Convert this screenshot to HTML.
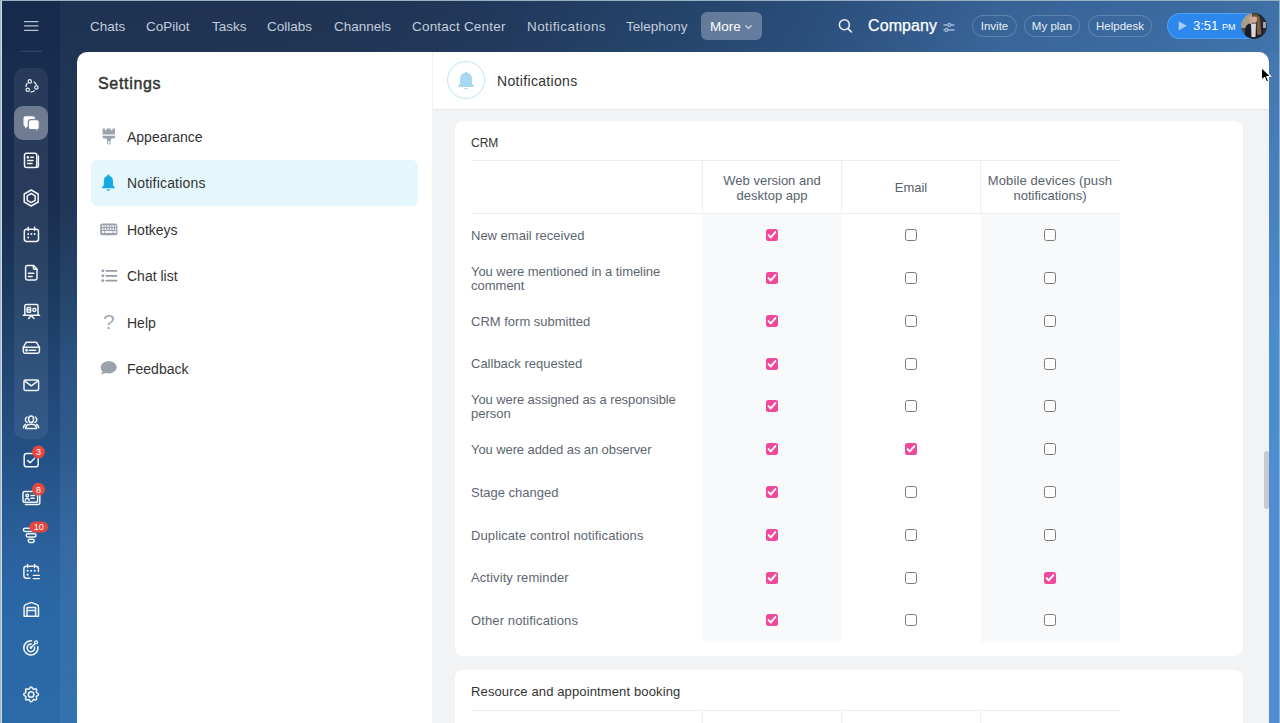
<!DOCTYPE html>
<html><head><meta charset="utf-8">
<style>
*{box-sizing:border-box;margin:0;padding:0}
html,body{width:1280px;height:723px;overflow:hidden;font-family:"Liberation Sans",sans-serif}
body{position:relative;background:#2d5486}
.abs{position:absolute}
#frame{position:absolute;left:0;top:0;width:1280px;height:723px;border-left:1px solid #a3b8cc;border-top:1px solid #98b1c2;border-right:1px solid #8fb0c8;box-shadow:inset 1px 0 0 #cdd9e0;z-index:50}
#side{position:absolute;left:2px;top:0;width:58px;height:723px;background:linear-gradient(180deg,rgba(0,20,57,.25) 0%,rgba(0,20,57,.25) 9%,rgba(0,26,63,.24) 52%,rgba(0,77,154,.21) 84%,rgba(0,63,136,.16) 98%)}
.nav{position:absolute;top:19px;font-size:13.5px;color:#c3cddb;white-space:nowrap;line-height:16px}
#panel{position:absolute;left:77px;top:52px;width:1192px;height:671px;background:#fff;border-radius:10px 10px 0 0}
#content{position:absolute;left:433px;top:110px;width:836px;height:613px;background:#f2f3f5}
.card{position:absolute;left:455px;width:788px;background:#fff;border-radius:8px}
.lbl{position:absolute;left:471px;font-size:13px;color:#5d6671;line-height:14px;width:225px;white-space:nowrap}
.th{position:absolute;top:173.3px;width:138px;text-align:center;font-size:13px;color:#58616c;line-height:15px;white-space:nowrap}
.colbg{position:absolute;background:#f8f9fb}
.cb{position:absolute;width:12px;height:12px;border-radius:2.5px}
.cb.off{border:1px solid #7b7b7b;background:#fff}
.cb.on{background:#f0489a}
.cb.on svg{position:absolute;left:0;top:0}
.sitem{position:absolute;left:127px;font-size:14px;color:#333;line-height:16px;white-space:nowrap}
.sico{position:absolute;left:99px;width:20px;height:20px}
.sb{position:absolute;left:21px;width:20px;height:20px}
.pill{position:absolute;top:15px;height:22px;border-radius:11px;border:1px solid rgba(255,255,255,.2);font-size:11.5px;color:#eaf0f6;text-align:center;line-height:20px;white-space:nowrap}
#hdrbg{position:absolute;left:0;top:0;width:1280px;height:64px;background:linear-gradient(180deg,rgba(0,10,40,.05),rgba(0,0,0,0)),linear-gradient(90deg,#1f3354 0%,#213554 23%,#223a5c 38%,#27476f 54%,#2b4f7c 62.5%,#3a679b 78%,#3c6da3 90%,#4176ad 100%)}
#leftbg{position:absolute;left:0;top:52px;width:77px;height:671px;background:linear-gradient(180deg,#203455 0%,#213555 7%,#213555 22%,#244569 35.5%,#2d5486 48.4%,#2e5d91 60.8%,#376aa5 74.2%,#356ea8 82.6%,#3372ae 100%)}
#rightbg{position:absolute;left:1268px;top:52px;width:12px;height:671px;background:linear-gradient(180deg,#4477b0 0%,#4a8ecf 46%,#508ed4 100%)}

</style></head><body>
<div id="hdrbg"></div><div id="leftbg"></div><div id="rightbg"></div>
<div id="side"></div>
<div id="frame"></div>
<svg class="abs" style="left:0;top:0;z-index:5" width="60" height="723" viewBox="0 0 60 723">
<g fill="none" stroke="#b9c4d3" stroke-width="1.2" stroke-linecap="round">
  <path d="M24.5 21.6H38M24.5 25.9H38M24.5 30.3H38"/>
</g>
<path d="M20.7 51.3H42.3" stroke="#3a4d6c" stroke-width="1"/>
<rect x="14" y="68" width="34" height="371" rx="10" fill="rgba(255,255,255,0.07)"/>
<rect x="14" y="106" width="34" height="34" rx="9" fill="rgba(255,255,255,0.33)"/>
<g fill="none" stroke="#e9edf3" stroke-width="1.3" stroke-linecap="round" stroke-linejoin="round">
  <!-- 1 flow -->
  <path d="M34.01 81.95A5.3 5.3 0 0 1 36.21 84.49M34.35 90.83A5.3 5.3 0 0 1 30.87 91.78M26.00 86.41A5.3 5.3 0 0 1 27.05 83.33" stroke-width="1.3"/>
  <circle cx="29.8" cy="81.4" r="1.7" stroke-width="1.2"/>
  <circle cx="36.4" cy="87.5" r="1.7" stroke-width="1.2"/>
  <circle cx="27.7" cy="89.8" r="1.7" stroke-width="1.2"/>
</g>
<!-- 2 chat -->
<g>
  <path d="M26 116.3H33Q35 116.3 35 118.3V124.5Q35 126.5 33 126.5H27.5L25 128.6V126.3Q23.5 126 23.5 124.5V118.3Q23.5 116.3 25.5 116.3Z" fill="#fff"/>
  <path d="M30.6 119.6H37Q39.2 119.6 39.2 121.8V127.4Q39.2 129.4 37.6 129.6V131.8L35.2 129.6H30.6Q28.4 129.6 28.4 127.4V121.8Q28.4 119.6 30.6 119.6Z" fill="#fff" stroke="#76859e" stroke-width="1.2"/>
</g>
<g fill="none" stroke="#f2f4f7" stroke-width="1.5" stroke-linecap="round" stroke-linejoin="round">
  <!-- 3 newspaper -->
  <rect x="24.5" y="153.3" width="12.3" height="14.3" rx="2"/>
  <path d="M38.4 156V166Q38.4 167.6 36.6 167.6"/>
  <path d="M30.8 157.3H33.5M27.6 160.6H33M27.6 163.6H32"/>
  <circle cx="27.9" cy="157.3" r=".6" fill="#fff"/>
  <!-- 4 hexagon -->
  <path d="M31.2 190L38.2 194V202L31.2 206L24.2 202V194Z"/>
  <path d="M31.2 193.5L35.2 195.8V200.3L31.2 202.6L27.2 200.3V195.8Z"/>
  <!-- 5 calendar -->
  <rect x="24.3" y="229.2" width="14.2" height="12.3" rx="2.4"/>
  <path d="M28.2 227.2V230.6M34.6 227.2V230.6"/>
  <!-- 6 doc -->
  <path d="M27.3 265.6H33.6L37 269V278.3Q37 280 35.3 280H27.3Q25.6 280 25.6 278.3V267.3Q25.6 265.6 27.3 265.6Z"/>
  <path d="M33.4 265.8V268Q33.4 269.2 34.6 269.2H36.8"/>
  <path d="M28.4 273.3H33.8M28.4 276.6H32.2"/>
  <!-- 7 presentation -->
  <path d="M23.3 315.2H39.6M24.8 315V306Q24.8 304.6 26.2 304.6H36.6Q38 304.6 38 306V315M31.3 315.6L28.6 318.4M31.3 315.6L34 318.4"/>
  <rect x="27.2" y="307.4" width="3.4" height="4.8" rx=".5"/><path d="M27.2 309.8H30.6"/>
  <circle cx="34.4" cy="309.8" r="1.6"/>
  <!-- 8 drive -->
  <path d="M23.3 347.3L25.7 343Q26.2 342.3 27 342.3H35.7Q36.5 342.3 37 343L39.4 347.3V351.6Q39.4 353.3 37.7 353.3H25Q23.3 353.3 23.3 351.6Z"/>
  <path d="M23.3 347.3H39.4M29.2 350.3H35.6"/>
  <circle cx="26.5" cy="350.3" r=".7" fill="#fff"/>
  <!-- 9 mail -->
  <rect x="24" y="380" width="14.6" height="10.6" rx="1.6"/>
  <path d="M24.6 380.8L31.3 385.8L38 380.8"/>
  <!-- 10 people -->
  <ellipse cx="31.1" cy="419.3" rx="2.5" ry="3.2"/>
  <path d="M25.6 428.4Q25.6 424.2 31.1 424.2Q36.6 424.2 36.6 428.4Z"/>
  <path d="M26.9 417.1Q25.2 418 25.4 420Q25.6 421.7 27.1 422.4M35.3 417.1Q37 418 36.8 420Q36.6 421.7 35.1 422.4M23.5 427.8Q23.7 425.3 25.5 424.3M38.7 427.8Q38.5 425.3 36.7 424.3"/>
  <!-- 11 tasks -->
  <rect x="24.2" y="453.4" width="14" height="13.4" rx="2.6"/>
  <path d="M27.8 460.6L30.1 462.8L34.4 458.4"/>
  <!-- 12 contact -->
  <rect x="23" y="491.4" width="14.6" height="10.8" rx="1.8"/>
  <path d="M25.4 504.4H37.8Q39.8 504.4 39.8 502.4V494"/>
  <circle cx="27.2" cy="495.6" r="1.3"/>
  <path d="M25.2 500.2Q25.5 498.4 27.2 498.4Q28.9 498.4 29.2 500.2M31 495.6H34.5M31 498.2H34"/>
  <!-- 13 funnel -->
  <rect x="23.4" y="528.2" width="14.6" height="3.2" rx="1.6"/>
  <rect x="26.2" y="533.8" width="9.8" height="3.2" rx="1.6"/>
  <rect x="28.2" y="539.2" width="6" height="3.2" rx="1.6"/>
  <!-- 14 calendar list -->
  <path d="M38.4 571.4V568.6Q38.4 566.2 36 566.2H26.3Q23.9 566.2 23.9 568.6V575.8Q23.9 578.2 26.3 578.2H29.8"/>
  <path d="M27.6 564.6V567.4M34.6 564.6V567.4"/><path d="M33.2 575.3H39.4M33.2 578.6H39.4" stroke-width="1.3"/>
  <!-- 15 warehouse -->
  <path d="M24.1 616.2V607.2Q24.1 605.4 25.6 604.6L31.3 602.4L37 604.6Q38.5 605.4 38.5 607.2V616.2Z"/>
  <path d="M27 616V607.4H35.6V616M27 610.6H35.6"/>
  <!-- 16 target -->
  <path d="M31.52 640.83A7.1 7.1 0 1 0 37.89 646.67"/>
  <path d="M31.23 644.11A3.8 3.8 0 1 0 34.57 646.92"/>
  <path d="M30.9 647.7L35 643.5"/>
  <circle cx="36.1" cy="642.3" r="1.5" stroke-width="1.3"/>
  <!-- 17 gear -->
  <path d="M38.50 694.40 L38.37 694.88 L38.02 695.31 L37.52 695.68 L37.02 695.99 L36.61 696.27 L36.37 696.58 L36.31 696.97 L36.40 697.46 L36.55 698.04 L36.63 698.65 L36.58 699.20 L36.33 699.63 L35.90 699.88 L35.35 699.93 L34.74 699.85 L34.16 699.70 L33.67 699.61 L33.28 699.67 L32.97 699.91 L32.69 700.32 L32.38 700.82 L32.01 701.32 L31.58 701.67 L31.10 701.80 L30.62 701.67 L30.19 701.32 L29.82 700.82 L29.51 700.32 L29.23 699.91 L28.92 699.67 L28.53 699.61 L28.04 699.70 L27.46 699.85 L26.85 699.93 L26.30 699.88 L25.87 699.63 L25.62 699.20 L25.57 698.65 L25.65 698.04 L25.80 697.46 L25.89 696.97 L25.83 696.58 L25.59 696.27 L25.18 695.99 L24.68 695.68 L24.18 695.31 L23.83 694.88 L23.70 694.40 L23.83 693.92 L24.18 693.49 L24.68 693.12 L25.18 692.81 L25.59 692.53 L25.83 692.22 L25.89 691.83 L25.80 691.34 L25.65 690.76 L25.57 690.15 L25.62 689.60 L25.87 689.17 L26.30 688.92 L26.85 688.87 L27.46 688.95 L28.04 689.10 L28.53 689.19 L28.92 689.13 L29.23 688.89 L29.51 688.48 L29.82 687.98 L30.19 687.48 L30.62 687.13 L31.10 687.00 L31.58 687.13 L32.01 687.48 L32.38 687.98 L32.69 688.48 L32.97 688.89 L33.28 689.13 L33.67 689.19 L34.16 689.10 L34.74 688.95 L35.35 688.87 L35.90 688.92 L36.33 689.17 L36.58 689.60 L36.63 690.15 L36.55 690.76 L36.40 691.34 L36.31 691.83 L36.37 692.22 L36.61 692.53 L37.02 692.81 L37.52 693.12 L38.02 693.49 L38.37 693.92Z"/>
  <circle cx="31.1" cy="694.4" r="2.75"/>
</g>
<g fill="#fff">
  <circle cx="28.2" cy="234" r=".95"/><circle cx="31.4" cy="234" r=".95"/><circle cx="34.6" cy="234" r=".95"/><circle cx="28.2" cy="237.5" r=".95"/>
  <circle cx="27.6" cy="570.8" r="1.05"/><circle cx="31.1" cy="570.8" r="1.05"/><circle cx="34.7" cy="570.8" r="1.05"/><circle cx="27.6" cy="574.6" r="1.05"/>
  <circle cx="30.9" cy="647.6" r="1.3"/>
</g>
<!-- badges -->
<g font-family="Liberation Sans" font-size="9" fill="#fff" text-anchor="middle">
  <circle cx="38.5" cy="452" r="6.4" fill="#e8473d"/>
  <text x="38.5" y="455.3">3</text>
  <circle cx="38.5" cy="489.2" r="6.4" fill="#e8473d"/>
  <text x="38.5" y="492.5">8</text>
  <rect x="29.4" y="521.4" width="18.6" height="11" rx="5.5" fill="#e8473d"/>
  <text x="38.7" y="530">10</text>
</g>
</svg>


<!-- header nav -->
<div class="nav" style="left:90px">Chats</div>
<div class="nav" style="left:146px">CoPilot</div>
<div class="nav" style="left:212px">Tasks</div>
<div class="nav" style="left:267px">Collabs</div>
<div class="nav" style="left:334px">Channels</div>
<div class="nav" style="left:412px;letter-spacing:.2px">Contact Center</div>
<div class="nav" style="left:527px;letter-spacing:.42px">Notifications</div>
<div class="nav" style="left:626px">Telephony</div>
<div class="abs" style="left:701px;top:12px;width:61px;height:28px;border-radius:6px;background:rgba(225,232,242,.33)"></div>
<div class="nav" style="left:710px;color:#fff">More</div>
<svg class="abs" style="left:744px;top:24px" width="10" height="6" viewBox="0 0 10 6"><path d="M1.4 1.4L4.5 4.5L7.6 1.4" fill="none" stroke="#dfe5ee" stroke-width="1.15"/></svg>
<!-- header right -->
<svg class="abs" style="left:836px;top:17px" width="18" height="18" viewBox="0 0 18 18"><circle cx="8.4" cy="7.8" r="5" fill="none" stroke="#eef2f7" stroke-width="1.5"/><path d="M12 11.6L15.4 15" stroke="#eef2f7" stroke-width="1.6" stroke-linecap="round"/></svg>
<div class="abs" style="left:868px;top:17px;font-size:16px;color:#fff;-webkit-text-stroke:.25px #fff;letter-spacing:.1px;line-height:18px;white-space:nowrap">Company</div>
<svg class="abs" style="left:942px;top:21px" width="14" height="12" viewBox="0 0 14 12"><g stroke="#a3b9d6" stroke-width="1.3" fill="none"><path d="M1.5 4H5.5M8.8 4H12.5M1.5 9H2.8M6 9H12.5"/><circle cx="7.2" cy="4" r="1.5"/><circle cx="4.4" cy="9" r="1.5"/></g></svg>
<div class="pill" style="left:972px;width:45px">Invite</div>
<div class="pill" style="left:1024px;width:56px">My plan</div>
<div class="pill" style="left:1088px;width:64px">Helpdesk</div>
<div class="abs" style="left:1167px;top:13px;width:92px;height:26px;border-radius:13px;background:#2c88ec;box-shadow:inset 0 0 0 1px rgba(160,200,255,.35)"></div>
<svg class="abs" style="left:1177px;top:20px" width="12" height="12" viewBox="0 0 12 12"><path d="M1.6 1.2L9.8 5.8L1.6 10.6Z" fill="#a9cdf6"/></svg>
<div class="abs" style="left:1193px;top:18px;font-size:13px;color:#fff;line-height:15px;white-space:nowrap">3:51</div>
<div class="abs" style="left:1222px;top:22px;font-size:9px;color:#fff;line-height:10px;white-space:nowrap">PM</div>
<svg class="abs" style="left:1241px;top:12.8px" width="26" height="26" viewBox="0 0 26 26">
  <defs><clipPath id="avc"><circle cx="13" cy="13" r="12.9"/></clipPath><filter id="avb" x="-10%" y="-10%" width="120%" height="120%"><feGaussianBlur stdDeviation=".55"/></filter></defs>
  <g clip-path="url(#avc)"><g filter="url(#avb)">
    <rect x="-2" y="-2" width="30" height="30" fill="#2b2f38"/>
    <rect x="-2" y="-2" width="13" height="17" fill="#a89c8c"/>
    <rect x="-2" y="15" width="10" height="13" fill="#4b4c4f"/>
    <rect x="19" y="-2" width="9" height="30" fill="#262b36"/>
    <rect x="22" y="9" width="3" height="6" fill="#9aa3ad"/>
    <path d="M4 28V16Q5 11 10 10H17Q21 11 22 16V28Z" fill="#1b1e25"/>
    <path d="M10 10.5H15L14.5 24H10.5Z" fill="#d6d8db"/>
    <path d="M12 2Q17 0 19 5L20.5 21Q18 23 16 21L15.5 8Z" fill="#7b5c42"/>
    <ellipse cx="13" cy="6" rx="3" ry="4" fill="#d0ac95"/>
    <path d="M11 1.5Q14 0 17 2L16 4Q13 3 11 4Z" fill="#6e5138"/>
    <rect x="8.3" y="3" width="2.6" height="8" rx="1.2" fill="#c9a48c"/>
  </g></g>
</svg>
</div>

<div id="panel"></div>
<div class="abs" style="left:432px;top:52px;width:1px;height:671px;background:#eef0f2"></div>
<div id="content"></div>
<div class="abs" style="left:433px;top:109px;width:836px;height:1px;background:#e6e8eb"></div>

<!-- settings nav -->
<div class="abs" style="left:98px;top:75px;font-size:16px;color:#333;-webkit-text-stroke:.45px #333;letter-spacing:.68px;line-height:18px">Settings</div>
<div class="abs" style="left:91px;top:160px;width:327px;height:46px;background:#e5f7fd;border-radius:6px"></div>
<div class="sitem" style="top:129px">Appearance</div>
<div class="sitem" style="top:175px;letter-spacing:.18px">Notifications</div>
<div class="sitem" style="top:221.6px">Hotkeys</div>
<div class="sitem" style="top:268.2px">Chat list</div>
<div class="sitem" style="top:314.8px">Help</div>
<div class="sitem" style="top:361px">Feedback</div>

<svg class="abs" style="left:96px;top:120px" width="26" height="260" viewBox="96 120 26 260">
  <!-- paintbrush -->
  <path d="M102.6 128.5H104.8V130.2H106.6V128.5H110.6V130.2H112.4V128.5H115V134.6H102.6Z" fill="#9ba2ac"/>
  <path d="M102.6 135.8H115V137.2Q115 138.6 113.6 138.6H111.2L110.4 141.2H107.2L106.4 138.6H104Q102.6 138.6 102.6 137.2Z" fill="#9ba2ac"/>
  <circle cx="108.8" cy="142.6" r="1.5" fill="none" stroke="#9ba2ac" stroke-width="1"/>
  <!-- bell -->
  <g transform="translate(0,-0.8)"><path d="M108.4 175.4Q109.5 175.4 109.6 176.7Q113 177.6 113 182.2V185.8L114.8 188.2V189H102V188.2L103.8 185.8V182.2Q103.8 177.6 107.2 176.7Q107.3 175.4 108.4 175.4Z" fill="#17a9e6"/>
  <path d="M106.3 190.2H110.5Q110 191.6 108.4 191.6Q106.8 191.6 106.3 190.2Z" fill="#17a9e6"/></g>
  <!-- keyboard -->
  <rect x="100.2" y="223.4" width="17.2" height="11.8" rx="2" fill="#9ba2ac"/>
  <g fill="#fff">
    <rect x="102" y="225.3" width="1.6" height="1.6"/><rect x="104.6" y="225.3" width="1.6" height="1.6"/><rect x="107.2" y="225.3" width="1.6" height="1.6"/><rect x="109.8" y="225.3" width="1.6" height="1.6"/><rect x="112.4" y="225.3" width="1.6" height="1.6"/><rect x="115" y="225.3" width="1.2" height="1.6"/>
    <rect x="102" y="228.2" width="1.6" height="1.6"/><rect x="104.6" y="228.2" width="1.6" height="1.6"/><rect x="107.2" y="228.2" width="1.6" height="1.6"/><rect x="109.8" y="228.2" width="1.6" height="1.6"/><rect x="112.4" y="228.2" width="1.6" height="1.6"/><rect x="115" y="228.2" width="1.2" height="1.6"/>
    <rect x="102" y="231.1" width="2.2" height="1.8"/><rect x="105" y="231.1" width="7.6" height="1.8"/><rect x="113.4" y="231.1" width="2.8" height="1.8"/>
  </g>
  <!-- list -->
  <g fill="#959ca6"><circle cx="102.8" cy="270.8" r="1.4"/><circle cx="102.8" cy="275.8" r="1.4"/><circle cx="102.8" cy="280.7" r="1.4"/></g>
  <path d="M106.2 270.8H116.5M106.2 275.8H116.5M106.2 280.7H116.5" stroke="#959ca6" stroke-width="1.8" stroke-linecap="round"/>
  <!-- bubble -->
  <path d="M108.7 361.2C113.2 361.2 116.7 363.8 116.7 367.3C116.7 370.8 113.2 373.4 108.7 373.4C107.6 373.4 106.6 373.3 105.7 373L101 374.6L102.6 371.6C101.4 370.5 100.7 369 100.7 367.3C100.7 363.8 104.2 361.2 108.7 361.2Z" fill="#9ba2ac"/>
</svg>
<div class="abs" style="left:103px;top:311px;font-size:21px;color:#a3aab3;line-height:22px">?</div>
<!-- content header bell -->
<svg class="abs" style="left:456px;top:70px" width="20" height="20" viewBox="456 70 20 20">
  <path d="M466 71.6Q467 71.6 467.1 72.7Q472 73.8 472 79.2V83.4L474 86V87H458V86L460 83.4V79.2Q460 73.8 464.9 72.7Q465 71.6 466 71.6Z" fill="#a8d7f2"/>
  <path d="M464 88H468Q467.6 89.2 466 89.2Q464.4 89.2 464 88Z" fill="#a8d7f2"/>
</svg>

<!-- content header -->
<div class="abs" style="left:447px;top:61px;width:38px;height:38px;border:1px solid #bfe4f7;border-radius:50%"></div>
<div class="abs" style="left:497px;top:73px;font-size:14px;color:#333;letter-spacing:.33px;line-height:16px">Notifications</div>

<div class="card" style="top:121px;height:535px"></div>
<div class="abs" style="left:471px;top:136px;font-size:12px;color:#333;line-height:14px">CRM</div>
<div class="abs" style="left:471px;top:160px;width:649px;height:1px;background:#eceef0"></div>
<div class="abs" style="left:471px;top:213px;width:649px;height:1px;background:#eceef0"></div>
<div class="abs" style="left:702px;top:161px;width:1px;height:52px;background:#eceef0"></div>
<div class="abs" style="left:841px;top:161px;width:1px;height:52px;background:#eceef0"></div>
<div class="abs" style="left:980px;top:161px;width:1px;height:52px;background:#eceef0"></div>
<div class="th" style="left:703px">Web version and<br>desktop app</div>
<div class="th" style="left:842px;top:180px">Email</div>
<div class="th" style="left:981px"><span style="letter-spacing:.11px">Mobile devices (push</span><br>notifications)</div>
<div class="colbg" style="left:703px;top:213.8px;width:138px;height:428.0px"></div>
<div class="colbg" style="left:981px;top:213.8px;width:139px;height:428.0px"></div>
<div class="lbl" style="top:229.0px">New email received</div>
<div class="cb on" style="left:766px;top:229.2px"><svg width="12" height="12" viewBox="0 0 12 12"><path d="M2.6 6.1 L4.6 8.5 L9.4 3.1" fill="none" stroke="#fff" stroke-width="1.9" stroke-linecap="round" stroke-linejoin="round"/></svg></div>
<div class="cb off" style="left:905px;top:229.2px"></div>
<div class="cb off" style="left:1044px;top:229.2px"></div>
<div class="lbl" style="top:264.5px"><span style="letter-spacing:-.06px">You were mentioned in a timeline</span><br>comment</div>
<div class="cb on" style="left:766px;top:272.0px"><svg width="12" height="12" viewBox="0 0 12 12"><path d="M2.6 6.1 L4.6 8.5 L9.4 3.1" fill="none" stroke="#fff" stroke-width="1.9" stroke-linecap="round" stroke-linejoin="round"/></svg></div>
<div class="cb off" style="left:905px;top:272.0px"></div>
<div class="cb off" style="left:1044px;top:272.0px"></div>
<div class="lbl" style="top:314.6px">CRM form submitted</div>
<div class="cb on" style="left:766px;top:314.8px"><svg width="12" height="12" viewBox="0 0 12 12"><path d="M2.6 6.1 L4.6 8.5 L9.4 3.1" fill="none" stroke="#fff" stroke-width="1.9" stroke-linecap="round" stroke-linejoin="round"/></svg></div>
<div class="cb off" style="left:905px;top:314.8px"></div>
<div class="cb off" style="left:1044px;top:314.8px"></div>
<div class="lbl" style="top:357.4px">Callback requested</div>
<div class="cb on" style="left:766px;top:357.6px"><svg width="12" height="12" viewBox="0 0 12 12"><path d="M2.6 6.1 L4.6 8.5 L9.4 3.1" fill="none" stroke="#fff" stroke-width="1.9" stroke-linecap="round" stroke-linejoin="round"/></svg></div>
<div class="cb off" style="left:905px;top:357.6px"></div>
<div class="cb off" style="left:1044px;top:357.6px"></div>
<div class="lbl" style="top:392.9px"><span style="letter-spacing:-.085px">You were assigned as a responsible</span><br>person</div>
<div class="cb on" style="left:766px;top:400.4px"><svg width="12" height="12" viewBox="0 0 12 12"><path d="M2.6 6.1 L4.6 8.5 L9.4 3.1" fill="none" stroke="#fff" stroke-width="1.9" stroke-linecap="round" stroke-linejoin="round"/></svg></div>
<div class="cb off" style="left:905px;top:400.4px"></div>
<div class="cb off" style="left:1044px;top:400.4px"></div>
<div class="lbl" style="top:443.0px"><span style="letter-spacing:-.09px">You were added as an observer</span></div>
<div class="cb on" style="left:766px;top:443.2px"><svg width="12" height="12" viewBox="0 0 12 12"><path d="M2.6 6.1 L4.6 8.5 L9.4 3.1" fill="none" stroke="#fff" stroke-width="1.9" stroke-linecap="round" stroke-linejoin="round"/></svg></div>
<div class="cb on" style="left:905px;top:443.2px"><svg width="12" height="12" viewBox="0 0 12 12"><path d="M2.6 6.1 L4.6 8.5 L9.4 3.1" fill="none" stroke="#fff" stroke-width="1.9" stroke-linecap="round" stroke-linejoin="round"/></svg></div>
<div class="cb off" style="left:1044px;top:443.2px"></div>
<div class="lbl" style="top:485.8px">Stage changed</div>
<div class="cb on" style="left:766px;top:486.0px"><svg width="12" height="12" viewBox="0 0 12 12"><path d="M2.6 6.1 L4.6 8.5 L9.4 3.1" fill="none" stroke="#fff" stroke-width="1.9" stroke-linecap="round" stroke-linejoin="round"/></svg></div>
<div class="cb off" style="left:905px;top:486.0px"></div>
<div class="cb off" style="left:1044px;top:486.0px"></div>
<div class="lbl" style="top:528.6px"><span style="letter-spacing:.11px">Duplicate control notifications</span></div>
<div class="cb on" style="left:766px;top:528.8px"><svg width="12" height="12" viewBox="0 0 12 12"><path d="M2.6 6.1 L4.6 8.5 L9.4 3.1" fill="none" stroke="#fff" stroke-width="1.9" stroke-linecap="round" stroke-linejoin="round"/></svg></div>
<div class="cb off" style="left:905px;top:528.8px"></div>
<div class="cb off" style="left:1044px;top:528.8px"></div>
<div class="lbl" style="top:571.4px"><span style="letter-spacing:.1px">Activity reminder</span></div>
<div class="cb on" style="left:766px;top:571.6px"><svg width="12" height="12" viewBox="0 0 12 12"><path d="M2.6 6.1 L4.6 8.5 L9.4 3.1" fill="none" stroke="#fff" stroke-width="1.9" stroke-linecap="round" stroke-linejoin="round"/></svg></div>
<div class="cb off" style="left:905px;top:571.6px"></div>
<div class="cb on" style="left:1044px;top:571.6px"><svg width="12" height="12" viewBox="0 0 12 12"><path d="M2.6 6.1 L4.6 8.5 L9.4 3.1" fill="none" stroke="#fff" stroke-width="1.9" stroke-linecap="round" stroke-linejoin="round"/></svg></div>
<div class="lbl" style="top:614.2px"><span style="letter-spacing:.12px">Other notifications</span></div>
<div class="cb on" style="left:766px;top:614.4px"><svg width="12" height="12" viewBox="0 0 12 12"><path d="M2.6 6.1 L4.6 8.5 L9.4 3.1" fill="none" stroke="#fff" stroke-width="1.9" stroke-linecap="round" stroke-linejoin="round"/></svg></div>
<div class="cb off" style="left:905px;top:614.4px"></div>
<div class="cb off" style="left:1044px;top:614.4px"></div>
<div class="card" style="top:670px;height:80px"></div>
<div class="abs" style="left:471px;top:684px;font-size:13px;color:#333;letter-spacing:.13px;line-height:15px">Resource and appointment booking</div>
<div class="abs" style="left:471px;top:710px;width:649px;height:1px;background:#eceef0"></div>
<div class="abs" style="left:702px;top:711px;width:1px;height:12px;background:#eceef0"></div>
<div class="abs" style="left:841px;top:711px;width:1px;height:12px;background:#eceef0"></div>
<div class="abs" style="left:980px;top:711px;width:1px;height:12px;background:#eceef0"></div>

<div class="abs" id="scrollthumb" style="left:1264px;top:451px;width:4.5px;height:58px;border-radius:3px;background:#c8cacd"></div>
<svg class="abs" style="left:1257.3px;top:63px;z-index:60" width="18" height="22" viewBox="0 0 18 22">
  <path d="M4.5 4.5V17.2L7.6 14.3L9.6 18.9L11.7 18L9.7 13.5H13.9Z" fill="#000" stroke="#fff" stroke-width="1.1" stroke-linejoin="round"/>
</svg>

</body></html>
